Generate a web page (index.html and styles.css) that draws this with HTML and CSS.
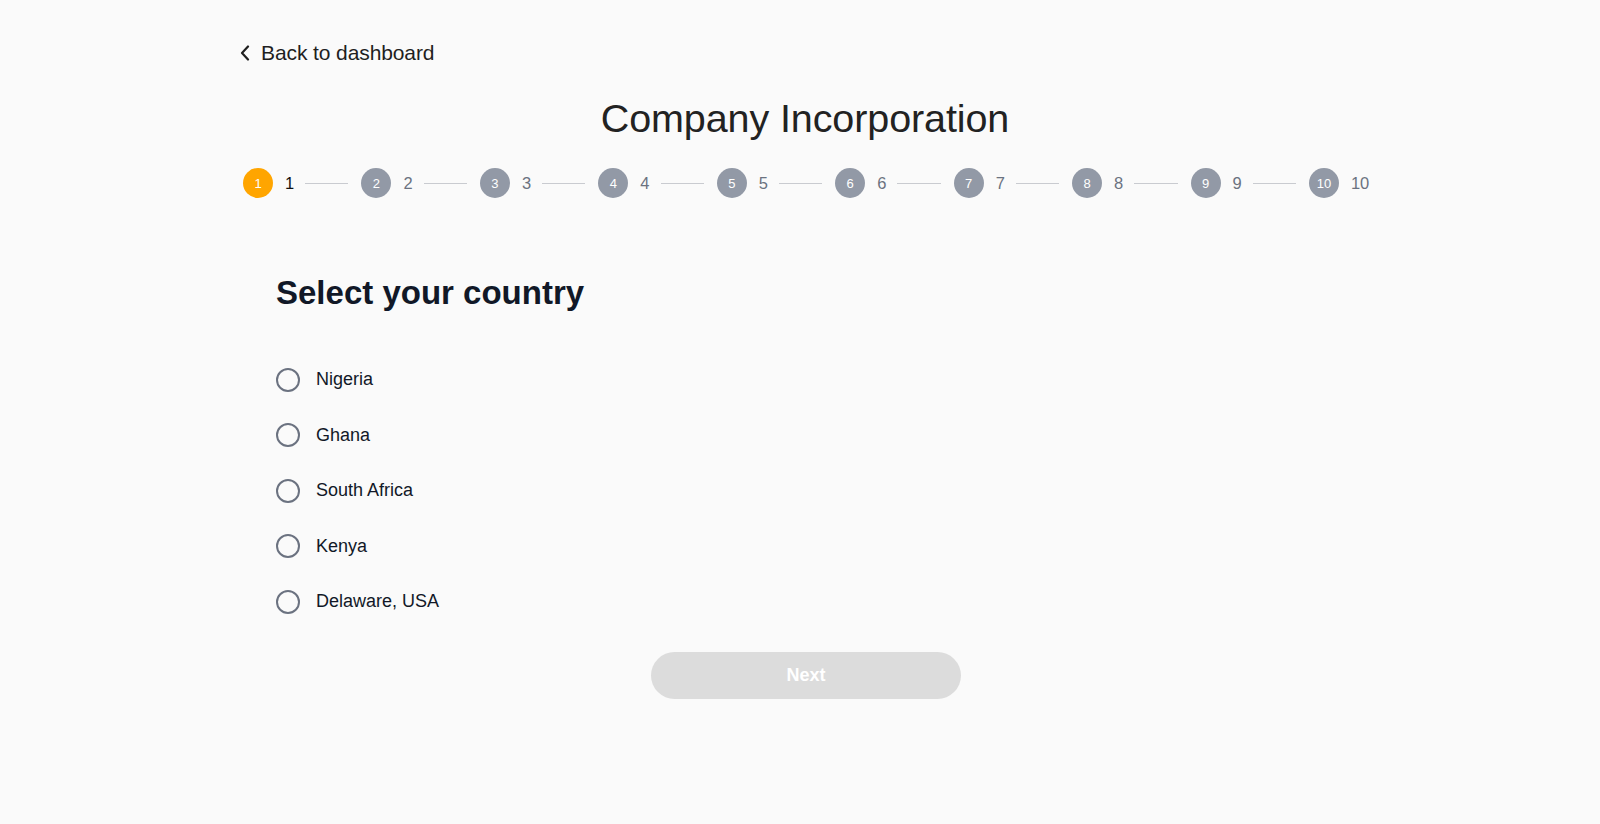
FILE: index.html
```html
<!DOCTYPE html>
<html lang="en">
<head>
<meta charset="utf-8">
<title>Company Incorporation</title>
<link rel="stylesheet" href="styles.css">
</head>
<body>
<div class="page">
  <a class="back" href="#">
    <svg class="back-icon" width="10" height="16" viewBox="0 0 10 16" aria-hidden="true"><path d="M8 1.5 L2 8 L8 14.5" fill="none" stroke="#1f1f1f" stroke-width="2.2" stroke-linecap="round" stroke-linejoin="round"/></svg>
    <span>Back to dashboard</span>
  </a>
  <h1 class="title">Company Incorporation</h1>
  <ol class="stepper">
    <li class="step active"><span class="dot">1</span><span class="label">1</span><span class="line"></span></li>
    <li class="step"><span class="dot">2</span><span class="label">2</span><span class="line"></span></li>
    <li class="step"><span class="dot">3</span><span class="label">3</span><span class="line"></span></li>
    <li class="step"><span class="dot">4</span><span class="label">4</span><span class="line"></span></li>
    <li class="step"><span class="dot">5</span><span class="label">5</span><span class="line"></span></li>
    <li class="step"><span class="dot">6</span><span class="label">6</span><span class="line"></span></li>
    <li class="step"><span class="dot">7</span><span class="label">7</span><span class="line"></span></li>
    <li class="step"><span class="dot">8</span><span class="label">8</span><span class="line"></span></li>
    <li class="step"><span class="dot">9</span><span class="label">9</span><span class="line"></span></li>
    <li class="step last"><span class="dot">10</span><span class="label">10</span></li>
  </ol>
  <section class="form">
    <h2 class="heading">Select your country</h2>
    <div class="options">
      <label class="option"><span class="radio"></span><span class="opt-text">Nigeria</span></label>
      <label class="option"><span class="radio"></span><span class="opt-text">Ghana</span></label>
      <label class="option"><span class="radio"></span><span class="opt-text">South Africa</span></label>
      <label class="option"><span class="radio"></span><span class="opt-text">Kenya</span></label>
      <label class="option"><span class="radio"></span><span class="opt-text">Delaware, USA</span></label>
    </div>
  </section>
  <div class="actions">
    <button class="next" type="button">Next</button>
  </div>
</div>
</body>
</html>
```

FILE: styles.css
```css
* { box-sizing: border-box; }
html, body { margin: 0; padding: 0; }
body {
  background: #fafafa;
  font-family: "Liberation Sans", Arial, sans-serif;
  color: #111827;
  min-height: 824px;
}
.page {
  width: 1130px;
  margin-left: 240px;
  padding-top: 41px;
}
.back {
  display: inline-flex;
  align-items: center;
  gap: 11px;
  color: #1f1f1f;
  text-decoration: none;
  font-size: 21px;
  line-height: 24px;
  letter-spacing: -0.1px;
}
.back-icon { display: block; }
.title {
  margin: 29px 0 0;
  text-align: center;
  font-weight: 400;
  font-size: 39.5px;
  line-height: 48px;
  color: #222222;
  letter-spacing: -0.1px;
}
.stepper {
  list-style: none;
  margin: 26px 0 0;
  padding: 0 0 0 3px;
  display: flex;
  align-items: center;
}
.step {
  display: flex;
  align-items: center;
}
.dot {
  width: 30px;
  height: 30px;
  border-radius: 50%;
  background: #9299a6;
  color: #ffffff;
  font-size: 13px;
  display: flex;
  align-items: center;
  justify-content: center;
}
.step.active .dot { background: #ffa500; }
.label {
  margin-left: 12px;
  font-size: 16.5px;
  color: #6b7280;
  min-width: 9px;
}
.step.active .label { color: #111111; }
.line {
  display: block;
  width: 43.25px;
  height: 1px;
  background: #c9cbd0;
  margin: 0 13px 0 11px;
}
.form {
  padding-left: 36px;
  margin-top: 75px;
}
.heading {
  margin: 0;
  font-size: 33px;
  line-height: 40px;
  font-weight: 700;
  color: #111827;
}
.options {
  margin-top: 54.6px;
  display: flex;
  flex-direction: column;
  gap: 31.5px;
}
.option {
  display: flex;
  align-items: center;
  height: 24px;
  gap: 16px;
}
.radio {
  width: 24px;
  height: 24px;
  border: 2px solid #6b7280;
  border-radius: 50%;
  flex: none;
}
.opt-text {
  font-size: 18px;
  color: #111827;
}
.actions {
  display: flex;
  justify-content: center;
  margin-top: 38px;
  padding-left: 2px;
}
.next {
  width: 310px;
  height: 47px;
  border: none;
  border-radius: 24px;
  background: #dcdcdc;
  color: #ffffff;
  font-family: "Liberation Sans", Arial, sans-serif;
  font-weight: 700;
  font-size: 18px;
}
```
